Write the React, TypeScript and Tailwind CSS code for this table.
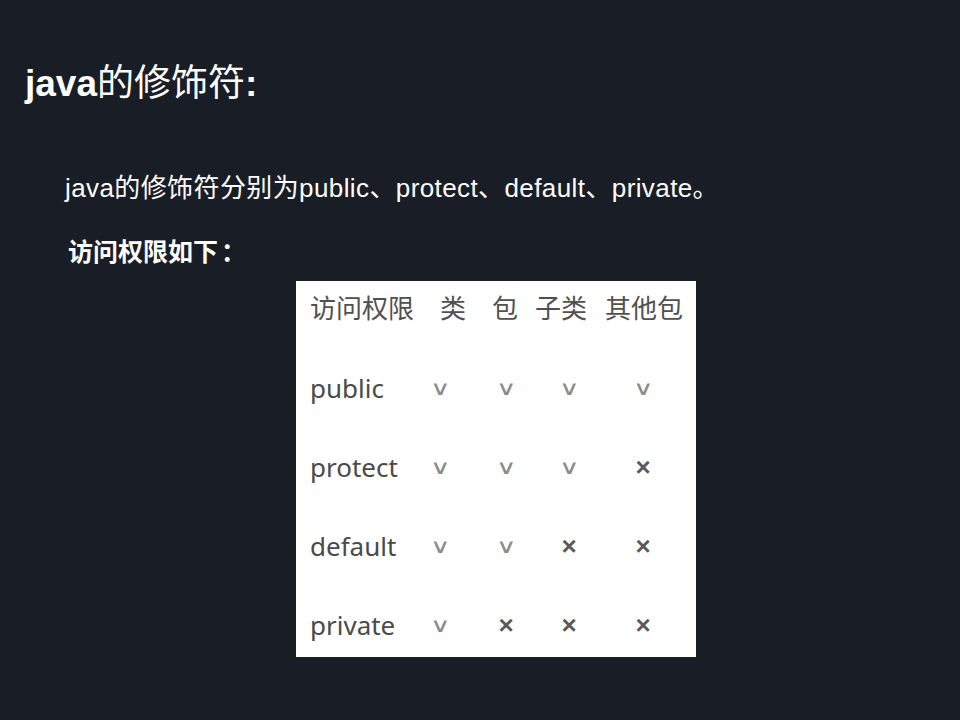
const rows: { name: string; marks: string[] }[] = [
  { name: 'public', marks: ['∨', '∨', '∨', '∨'] },
  { name: 'protect', marks: ['∨', '∨', '∨', '×'] },
  { name: 'default', marks: ['∨', '∨', '×', '×'] },
  { name: 'private', marks: ['∨', '×', '×', '×'] },
];

function Mark({ value }: { value: string }) {
  if (value === '∨') {
    return (
      <span className="inline-block scale-x-[1.4] text-[20px] leading-none text-[#8c8c8c] [font-family:'DejaVu_Sans',sans-serif]">
        ∨
      </span>
    );
  }
  return (
    <span className="text-[26px] leading-none font-bold text-[#5a5a5a] [font-family:'Liberation_Sans',sans-serif]">
      ×
    </span>
  );
}

function AccessTable() {
  return (
    <div className="ml-[296px] mt-[13px] flex h-[376px] w-[400px] flex-col bg-white pl-[14px] [font-family:'Noto_Sans','Noto_Sans_CJK_SC',sans-serif]">
      {/* header */}
      <div className="flex h-[54px] items-center text-[26px] text-[#505050]">
        <span>访问权限</span>
        <span className="ml-[26px]">类</span>
        <span className="ml-[26px]">包</span>
        <span className="ml-[17px]">子类</span>
        <span className="ml-[18px]">其他包</span>
      </div>

      <div className="mt-[33px] flex flex-col gap-[39px]">
        {rows.map((row) => (
          <div
            key={row.name}
            className="grid h-[40px] grid-cols-[96px_68px_64px_62px_86px] items-center"
          >
            <span className="text-[26px] leading-none text-[#4a4a4a]">{row.name}</span>
            {row.marks.map((m, i) => (
              <div key={i} className="flex justify-center">
                <Mark value={m} />
              </div>
            ))}
          </div>
        ))}
      </div>
    </div>
  );
}

export default function App() {
  return (
    <div className="h-[720px] w-[960px] overflow-hidden bg-[#191e26] pt-[62px] text-white [font-family:'Liberation_Sans','Noto_Sans_CJK_SC',sans-serif]">
      <h1 className="ml-[25px] text-[37px] leading-[44px] font-bold">
        java<span className="font-normal">的修饰符</span>:
      </h1>

      <p className="ml-[65px] mt-[66px] text-[26px] leading-[32px] tracking-[0.4px]">
        java的修饰符分别为public、protect、default、private。
      </p>

      <p className="ml-[68px] mt-[32px] text-[25px] leading-[32px] font-bold">
        访问权限如下<span className="ml-[3px]">：</span>
      </p>

      <AccessTable />
    </div>
  );
}
